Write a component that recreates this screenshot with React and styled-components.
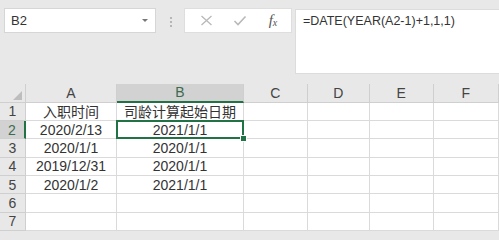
import React from "react"
import styled, { createGlobalStyle, css } from "styled-components"

const GlobalStyle = createGlobalStyle`
  html, body {
    margin: 0;
    padding: 0;
    background: #e8e8e8;
    overflow: hidden;
  }
`

const green = "#217346"

const Page = styled.div`
  width: 499px;
  height: 231px;
  overflow: hidden;
  background: #e8e8e8;
  display: flex;
  flex-direction: column;
  font-family: "Liberation Sans", "Noto Sans CJK SC", sans-serif;
`

const FormulaBar = styled.div`
  height: 84px;
  flex-shrink: 0;
  box-sizing: border-box;
  padding: 8px 0 0 4px;
  display: flex;
  align-items: flex-start;
`

const NameBox = styled.div`
  width: 152px;
  height: 25px;
  box-sizing: border-box;
  background: #fff;
  border: 1px solid #d6d6d6;
  display: flex;
  align-items: center;
  justify-content: space-between;
  padding: 0 7px 0 6px;
  font-size: 13px;
  color: #333;
`

const Caret = styled.span`
  width: 0;
  height: 0;
  border-left: 3px solid transparent;
  border-right: 3px solid transparent;
  border-top: 3px solid #777;
`

const Grip = styled.div`
  width: 3px;
  margin: 9px 11px 0 14px;
  display: flex;
  flex-direction: column;
  gap: 2px;

  span {
    width: 2px;
    height: 2px;
    border-radius: 50%;
    background: #a6a6a6;
  }
`

const ButtonGroup = styled.div`
  width: 108px;
  height: 25px;
  box-sizing: border-box;
  background: #fff;
  border: 1px solid #dedede;
  display: flex;
  align-items: center;
  padding-left: 13px;
  gap: 18px;
`

const IconButton = styled.span`
  width: 16px;
  height: 16px;
  display: flex;
  align-items: center;
  justify-content: center;
`

const Fx = styled.span`
  font-family: "Liberation Serif", serif;
  font-style: italic;
  font-size: 15px;
  color: #555;
  line-height: 16px;
  margin-left: -2px;

  sub {
    font-size: 10px;
    vertical-align: baseline;
    position: relative;
    top: 1px;
  }
`

const FormulaInput = styled.div`
  flex: 1;
  height: 65px;
  margin: 1px 0 0 3px;
  box-sizing: border-box;
  background: #fff;
  border: 1px solid #dcdcdc;
  border-right: none;
  padding: 4px 0 0 7px;
  font-size: 12.5px;
  color: #333;
`

const Sheet = styled.div`
  flex: 1;
  display: grid;
  grid-template-columns: 26px 91px 127px 63.5px 62.5px 63.5px 1fr;
  grid-template-rows: 18.7px;
  grid-auto-rows: 18.35px;
  align-content: start;
  background: #fff;
`

const Cell = styled.div`
  position: relative;
  box-sizing: border-box;
  border-right: 1px solid #dadada;
  border-bottom: 1px solid #dadada;
  display: flex;
  align-items: center;
  justify-content: center;
  font-size: 14px;
  color: #333;
  white-space: nowrap;

  ${({ $active }) =>
    $active &&
    css`
      &::after {
        content: "";
        position: absolute;
        left: -1px;
        top: -1px;
        right: -1px;
        bottom: -1px;
        border: 2px solid ${green};
      }
      &::before {
        content: "";
        position: absolute;
        right: -4px;
        bottom: -4px;
        width: 5px;
        height: 5px;
        background: ${green};
        border: 1px solid #fff;
        z-index: 2;
      }
    `}
`

const Header = styled.div`
  box-sizing: border-box;
  background: #e8e8e8;
  border-right: 1px solid #cfcfcf;
  border-bottom: 1px solid #cfcfcf;
  display: flex;
  align-items: center;
  justify-content: center;
  font-size: 14px;
  color: #444;

  ${({ $selected, $row }) =>
    $selected &&
    css`
      background: #d2d2d2;
      color: #3e6a50;
      ${$row
        ? css`
            border-right: 2px solid ${green};
          `
        : css`
            border-bottom: 2px solid ${green};
          `}
    `}
`

const Corner = styled(Header)`
  align-items: flex-end;
  justify-content: flex-end;
  padding: 0 3px 2px 0;
`

const columns = ["A", "B", "C", "D", "E", "F"]

const rows = [
  ["入职时间", "司龄计算起始日期"],
  ["2020/2/13", "2021/1/1"],
  ["2020/1/1", "2020/1/1"],
  ["2019/12/31", "2020/1/1"],
  ["2020/1/2", "2021/1/1"],
  ["", ""],
  ["", ""],
]

const App = () => {
  return (
    <Page>
      <GlobalStyle />
      <FormulaBar>
        <NameBox>
          B2
          <Caret />
        </NameBox>
        <Grip>
          <span />
          <span />
          <span />
        </Grip>
        <ButtonGroup>
          <IconButton>
            <svg width="13" height="13" viewBox="0 0 13 13">
              <path
                d="M1.5 2 L11.5 11 M11.5 2 L1.5 11"
                stroke="#b9b9b9"
                strokeWidth="1.3"
                fill="none"
              />
            </svg>
          </IconButton>
          <IconButton>
            <svg width="14" height="13" viewBox="0 0 14 13">
              <path
                d="M1.5 7 L5 10.5 L12.5 2.5"
                stroke="#b9b9b9"
                strokeWidth="1.6"
                fill="none"
              />
            </svg>
          </IconButton>
          <IconButton>
            <Fx>
              f<sub>x</sub>
            </Fx>
          </IconButton>
        </ButtonGroup>
        <FormulaInput>=DATE(YEAR(A2-1)+1,1,1)</FormulaInput>
      </FormulaBar>

      <Sheet>
        <Corner>
          <svg width="9" height="9" viewBox="0 0 9 9">
            <path d="M9 0 L9 9 L0 9 Z" fill="#bdbdbd" />
          </svg>
        </Corner>
        {columns.map((c) => (
          <Header key={c} $selected={c === "B"}>
            {c}
          </Header>
        ))}

        {rows.map((r, ri) => (
          <React.Fragment key={ri}>
            <Header $row $selected={ri === 1}>
              {ri + 1}
            </Header>
            <Cell>{r[0]}</Cell>
            <Cell $active={ri === 1}>{r[1]}</Cell>
            <Cell />
            <Cell />
            <Cell />
            <Cell />
          </React.Fragment>
        ))}
      </Sheet>
    </Page>
  )
}

export default App
